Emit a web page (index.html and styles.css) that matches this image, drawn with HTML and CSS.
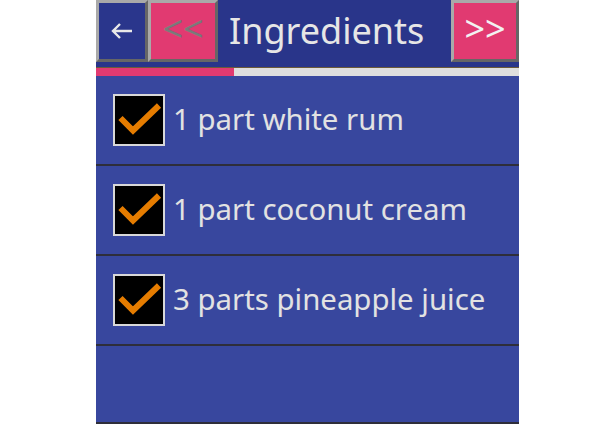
FILE: index.html
```html
<!DOCTYPE html>
<html lang="en">
<head>
<meta charset="utf-8">
<title>Ingredients</title>
<link rel="stylesheet" href="styles.css">
</head>
<body>
<div class="app">
  <header class="header">
    <button class="btn btn-back" aria-label="Back">
      <svg width="24" height="18" viewBox="0 0 24 18"><path d="M22 9H3M10 2L3 9l7 7" fill="none" stroke="#e8e8e8" stroke-width="2.4"/></svg>
    </button>
    <button class="btn btn-nav btn-prev">&lt;&lt;</button>
    <h1 class="title">Ingredients</h1>
    <button class="btn btn-nav btn-next">&gt;&gt;</button>
  </header>
  <div class="progress"><div class="progress-fill" style="width: 138px"></div></div>
  <ul class="list">
    <li class="row">
      <span class="check"><svg width="48" height="48" viewBox="0 0 48 48"><path d="M5.5 22L18 34.5L44 9.5" fill="none" stroke="#e57c00" stroke-width="6"/></svg></span>
      <span class="label">1 part white rum</span>
    </li>
    <li class="row">
      <span class="check"><svg width="48" height="48" viewBox="0 0 48 48"><path d="M5.5 22L18 34.5L44 9.5" fill="none" stroke="#e57c00" stroke-width="6"/></svg></span>
      <span class="label">1 part coconut cream</span>
    </li>
    <li class="row">
      <span class="check"><svg width="48" height="48" viewBox="0 0 48 48"><path d="M5.5 22L18 34.5L44 9.5" fill="none" stroke="#e57c00" stroke-width="6"/></svg></span>
      <span class="label">3 parts pineapple juice</span>
    </li>
    <li class="row row-empty"></li>
  </ul>
</div>
</body>
</html>
```

FILE: styles.css
```css
html, body {
  margin: 0;
  padding: 0;
  background: #ffffff;
}

.app {
  margin-left: 96px;
  width: 423px;
  height: 424px;
  box-sizing: border-box;
  background: #38479e;
  border-bottom: 2px solid #2e2e3a;
  display: flex;
  flex-direction: column;
  overflow: hidden;
  font-family: "Noto Sans", "Open Sans", sans-serif;
  color: #e4e4e4;
}

.header {
  height: 67px;
  flex: none;
  background: #29358a;
  display: flex;
  align-items: flex-start;
}

.btn {
  height: 62px;
  box-sizing: border-box;
  border: 3px solid;
  border-color: #a9a9a9 #666666 #666666 #a9a9a9;
  padding: 0;
  margin: 0;
  display: flex;
  align-items: center;
  justify-content: center;
  font-family: inherit;
  flex: none;
}

.btn-back {
  width: 52px;
  background: #2a368c;
}

.btn-nav {
  background: #e13a71;
  font-size: 36px;
  line-height: 1;
  padding-bottom: 4px;
}

.btn-prev {
  width: 70px;
  color: #7a7a7a;
}

.btn-next {
  width: 68px;
  margin-left: auto;
  color: #f2f2f2;
}

.title {
  margin: 0;
  padding-left: 11px;
  font-size: 36px;
  font-weight: 400;
  line-height: 62px;
  color: #e6e6e6;
  padding-bottom: 4px;
}

.progress {
  height: 9px;
  flex: none;
  background: #dedede;
  border-top: 1px solid #6b5a3a;
  box-sizing: border-box;
}

.progress-fill {
  height: 100%;
  background: #e13a71;
}

.list {
  list-style: none;
  margin: 0;
  padding: 0;
}

.row {
  height: 90px;
  box-sizing: border-box;
  border-bottom: 2px solid #2e2e3a;
  display: flex;
  align-items: center;
  padding-left: 17px;
}

.check {
  width: 52px;
  height: 52px;
  box-sizing: border-box;
  border: 2px solid #d8d8d8;
  background: #000000;
  display: flex;
  flex: none;
  margin-right: 8px;
}

.label {
  font-size: 29.4px;
  color: #e2e2e2;
  padding-bottom: 2px;
}
```
